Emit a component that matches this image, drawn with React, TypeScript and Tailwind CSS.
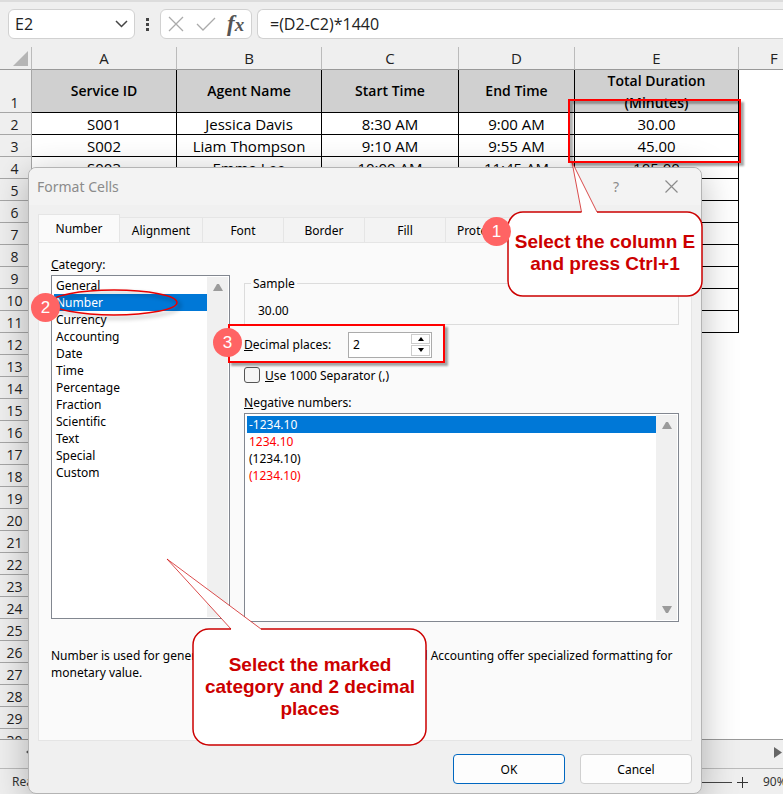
import { useState } from "react";

const sheetFont = "font-['Open_Sans','Noto_Sans',sans-serif]";
const uiFont = "font-['Noto_Sans','Open_Sans',sans-serif]";
const noteFont = "font-['Liberation_Sans',Arial,sans-serif]";

const headers = ["Service ID", "Agent Name", "Start Time", "End Time"];
const records = [
  ["S001", "Jessica Davis", "8:30 AM", "9:00 AM", "30.00"],
  ["S002", "Liam Thompson", "9:10 AM", "9:55 AM", "45.00"],
  ["S003", "Emma Lee", "10:00 AM", "11:45 AM", "105.00"],
];
const borderedRows = 11;
const lastRow = 30;

const categories = [
  "General",
  "Number",
  "Currency",
  "Accounting",
  "Date",
  "Time",
  "Percentage",
  "Fraction",
  "Scientific",
  "Text",
  "Special",
  "Custom",
];

const negatives = [
  { text: "-1234.10", red: false },
  { text: "1234.10", red: true },
  { text: "(1234.10)", red: false },
  { text: "(1234.10)", red: true },
];

function FormulaBar() {
  return (
    <div className={`flex h-[47px] shrink-0 border-t-2 border-[#dcdcdc] bg-[#efefef] pt-[7px] pl-2 text-base text-[#222] ${sheetFont}`}>
      <div className="flex h-[30px] w-[127px] items-center justify-between rounded-md border border-[#d1d1d1] bg-white pr-1.5 pl-1.5">
        <input aria-label="Name box" className="w-16 bg-transparent outline-none" defaultValue="E2" />
        <svg width="13" height="8" viewBox="0 0 13 8" fill="none" stroke="#444" strokeWidth="1.500">
          <path d="M1 1l5.500 5.500L12 1" />
        </svg>
      </div>
      <svg className="mx-[10px] mt-2" width="5" height="15" viewBox="0 0 5 15" fill="#444">
        <path d="M1 1h3v3H1zM1 6h3v3H1zM1 11h3v3H1z" />
      </svg>
      <div className="flex h-[30px] w-[92px] items-center rounded-md border border-[#d1d1d1] bg-white pl-[7px]">
        <button aria-label="Cancel entry">
          <svg width="16" height="16" viewBox="0 0 16 16" stroke="#aaa" strokeWidth="1.300">
            <path d="M1 1l14 14M15 1L1 15" />
          </svg>
        </button>
        <button aria-label="Enter" className="ml-3">
          <svg width="20" height="16" viewBox="0 0 20 16" fill="none" stroke="#aaa" strokeWidth="1.300">
            <path d="M1 8l6 6L19 2" />
          </svg>
        </button>
        <button
          aria-label="Insert function"
          className="ml-[11px] font-['Liberation_Serif',serif] text-[23px] leading-6 font-bold text-[#555] italic"
        >
          f<span className="text-[19px]">x</span>
        </button>
      </div>
      <div className="ml-[5px] flex h-[30px] min-w-0 flex-1 items-center rounded-l-md border border-r-0 border-[#d1d1d1] bg-white pl-3">
        <input aria-label="Formula" className="w-full bg-transparent outline-none" defaultValue="=(D2-C2)*1440" />
      </div>
    </div>
  );
}

function Sheet() {
  const rows = Array.from({ length: lastRow - 1 }, (_, i) => i + 2);
  const rowHead =
    "border-r border-b border-[#a6a6a6] bg-[#efefef] pt-0.5 pr-0.5 pb-0 pl-0 text-center align-bottom text-sm leading-[19px] font-normal text-[#222]";
  const colHead = "h-[23px] border-b border-[#999] bg-[#efefef] p-0 font-normal text-[#222]";
  const dataHead = "border-r border-b border-black bg-[#d0d0d0] p-0 text-sm font-semibold";
  return (
    <div className="min-h-0 flex-1 overflow-hidden bg-white">
      <table className={`w-full table-fixed border-separate border-spacing-0 text-[15px] leading-[19px] text-black ${sheetFont}`}>
        <colgroup>
          <col className="w-8" />
          <col className="w-[145px]" />
          <col className="w-[145px]" />
          <col className="w-[137px]" />
          <col className="w-[116px]" />
          <col className="w-[164px]" />
          <col />
        </colgroup>
        <thead>
          <tr>
            <th className={`${colHead} border-r border-r-[#bbb]`}>
              <svg className="ml-[13px]" width="15" height="15" viewBox="0 0 15 15" fill="#b5b5b5">
                <path d="M15 0v15H0z" />
              </svg>
            </th>
            {["A", "B", "C", "D", "E"].map((c) => (
              <th key={c} className={`${colHead} border-r border-r-[#bbb]`}>
                {c}
              </th>
            ))}
            <th className={`${colHead} text-left`}>
              <span className="pl-[31px]">F</span>
            </th>
          </tr>
        </thead>
        <tbody>
          <tr className="h-[43px]">
            <th className={rowHead}>1</th>
            {headers.map((h) => (
              <th key={h} className={dataHead}>
                {h}
              </th>
            ))}
            <th className={dataHead}>
              <div className="h-[42px] overflow-hidden leading-[22px]">
                Total Duration
                <br />
                (Minutes)
              </div>
            </th>
          </tr>
          {rows.map((n) => (
            <tr key={n} className="h-[22px]">
              <th className={rowHead}>{n}</th>
              {n <= borderedRows &&
                [0, 1, 2, 3, 4].map((c) => (
                  <td key={c} className="border-r border-b border-black px-0 pt-0.5 pb-0 text-center">
                    {records[n - 2]?.[c]}
                  </td>
                ))}
            </tr>
          ))}
        </tbody>
      </table>
    </div>
  );
}

function BottomBars() {
  return (
    <div className={`shrink-0 bg-[#efefef] text-[12px] text-[#333] ${uiFont}`}>
      <div className="flex h-[29px] items-center justify-between border-t border-[#999] pr-px pb-1 pl-6">
        <svg width="8" height="10" viewBox="0 0 8 10" fill="#555">
          <path d="M7 1v8L2 5z" />
        </svg>
        <svg width="8" height="11" viewBox="0 0 8 11" fill="#666">
          <path d="M0 0v11L8 5.500z" />
        </svg>
      </div>
      <div className="flex h-[26px] items-center justify-between border-t border-[#bbb] pt-px pl-3">
        <span>Ready</span>
        <div className="flex items-center">
          <span className="h-px w-20 bg-[#444]" />
          <button aria-label="Zoom in" className="mx-[5px]">
            <svg width="11" height="11" viewBox="0 0 11 11" stroke="#333">
              <path d="M5.500 0v11M0 5.500h11" />
            </svg>
          </button>
          <span className="ml-2.5 w-5 whitespace-nowrap">90%</span>
        </div>
      </div>
    </div>
  );
}

function Arrow({ down = false }: { down?: boolean }) {
  return (
    <svg width="10" height="8" viewBox="0 0 10 8" fill="#9b9b9b">
      <path d={down ? "M0 1h10L6 8H4z" : "M0 7h10L6 0H4z"} />
    </svg>
  );
}

function FormatCells() {
  const [category, setCategory] = useState(1);
  const [negative, setNegative] = useState(0);
  const [places, setPlaces] = useState(2);
  const tab = "h-[25px] border border-b-0 border-l-0 border-[#e5e5e5] bg-[#f3f3f3]";
  return (
    <section
      role="dialog"
      aria-label="Format Cells"
      className={`absolute top-[167px] left-[28px] w-[674px] rounded-lg border border-[#b4b4b4] bg-[#f0f0f0] pb-[9px] text-[12px] leading-[17px] text-black shadow-[0_8px_36px_rgba(0,0,0,0.28)] ${uiFont}`}
    >
      <header className="flex h-[37px] items-center rounded-t-lg bg-[#f3f3f3] pl-2 text-sm text-[#8b8b8b]">
        <h1 className="flex-1">Format Cells</h1>
        <button aria-label="Help" className="mr-[46px]">
          ?
        </button>
        <button aria-label="Close" className="mr-[23px]">
          <svg width="13" height="13" viewBox="0 0 13 13" stroke="#8b8b8b" strokeWidth="1.200">
            <path d="M.5.5l12 12M12.500.5l-12 12" />
          </svg>
        </button>
      </header>

      <div className="px-[9px] pt-[9px]">
        <nav role="tablist" className="flex items-end">
          <button role="tab" aria-selected="true" className="h-7 w-[82px] border border-b-0 border-[#e5e5e5] bg-[#fafafa]">
            Number
          </button>
          <button role="tab" className={`${tab} w-[83px]`}>Alignment</button>
          <button role="tab" className={`${tab} w-[81px]`}>Font</button>
          <button role="tab" className={`${tab} w-[81px]`}>Border</button>
          <button role="tab" className={`${tab} w-[81px]`}>Fill</button>
          <button role="tab" className={`${tab} w-[81px]`}>Protection</button>
        </nav>

        <div className="border border-[#e5e5e5] bg-[#fafafa] px-3 pt-[13px] pb-[59px]">
          <div className="flex gap-3.5">
            <div>
              <h2 id="category">
                <u>C</u>ategory:
              </h2>
              <div className="mt-0.5 flex h-[344px] w-[179px] border border-[#828790] bg-white p-px">
                <ul role="listbox" aria-labelledby="category" className="flex-1 pl-px leading-4">
                  {categories.map((c, i) => (
                    <li
                      key={c}
                      role="option"
                      aria-selected={i === category}
                      onClick={() => setCategory(i)}
                      className={`pt-px pl-0.5 ${i === category ? "bg-[#0078d7] text-white" : ""}`}
                    >
                      {c}
                    </li>
                  ))}
                </ul>
                <div className="flex w-[21px] justify-center bg-[#f0f0f0] pt-[7px]">
                  <Arrow />
                </div>
              </div>
            </div>

            <div className="min-w-0 flex-1 pt-[19px]">
              <fieldset className="h-[50px] border border-[#dcdcdc] pl-[13px]">
                <legend className="-ml-[7px] px-0.5">Sample</legend>
                <output className="mt-2.5 block">30.00</output>
              </fieldset>
              <div className="mt-1.5 flex h-[27px] items-center">
                <label htmlFor="places" className="w-[104px]">
                  <u>D</u>ecimal places:
                </label>
                <div className="flex h-[26px] w-[84px] border border-[#ababab] bg-white p-px">
                  <input
                    id="places"
                    type="text"
                    inputMode="numeric"
                    value={places}
                    onChange={(e) => setPlaces(Number(e.target.value) || 0)}
                    className="min-w-0 flex-1 bg-transparent pl-[3px] outline-none"
                  />
                  <div className="flex w-[19px] flex-col gap-px">
                    <button
                      aria-label="Increase"
                      onClick={() => setPlaces(places + 1)}
                      className="flex flex-1 items-center justify-center border border-[#ccc]"
                    >
                      <svg width="6" height="4" viewBox="0 0 6 4">
                        <path d="M0 4h6L3 0z" />
                      </svg>
                    </button>
                    <button
                      aria-label="Decrease"
                      onClick={() => setPlaces(Math.max(0, places - 1))}
                      className="flex flex-1 items-center justify-center border border-[#ccc]"
                    >
                      <svg width="6" height="4" viewBox="0 0 6 4">
                        <path d="M0 0h6L3 4z" />
                      </svg>
                    </button>
                  </div>
                </div>
              </div>
              <label className="mt-2 flex h-[18px] items-center gap-[5px]">
                <input
                  type="checkbox"
                  className="size-4 appearance-none rounded-[3px] border border-[#555] bg-[#f5f5f5] checked:bg-[#0078d7]"
                />
                <span>
                  <u>U</u>se 1000 Separator (,)
                </span>
              </label>
              <h2 id="negative" className="mt-2.5">
                <u>N</u>egative numbers:
              </h2>
              <div className="mt-0.5 flex h-[209px] border border-[#828790] bg-white p-px">
                <ul role="listbox" aria-labelledby="negative" className="flex-1 pt-px pl-px leading-4">
                  {negatives.map((n, i) => (
                    <li
                      key={i}
                      role="option"
                      aria-selected={i === negative}
                      onClick={() => setNegative(i)}
                      className={`pt-px pl-0.5 ${
                        i === negative ? "bg-[#0078d7] text-white" : n.red ? "text-[#f00]" : ""
                      }`}
                    >
                      {n.text}
                    </li>
                  ))}
                </ul>
                <div className="flex w-[21px] flex-col items-center justify-between bg-[#f0f0f0] py-[7px]">
                  <Arrow />
                  <Arrow down />
                </div>
              </div>
            </div>
          </div>
          <p className="mt-[25px]">
            Number is used for general display of numbers.
            <span className="pl-8">Currency and Accounting offer specialized formatting for monetary value.</span>
          </p>
        </div>

        <footer className="mt-[13px] flex justify-end gap-[15px]">
          <button className="h-[30px] w-28 rounded border border-[#0067c0] bg-[#fdfdfd]">OK</button>
          <button className="h-[30px] w-28 rounded border border-[#d0d0d0] bg-[#fdfdfd]">Cancel</button>
        </footer>
      </div>
    </section>
  );
}

function StepBadge({ step, className }: { step: number; className: string }) {
  return (
    <span
      className={`absolute flex size-[29px] items-center justify-center rounded-full bg-[#ff6464] text-[17px] font-normal text-white ${noteFont} ${className}`}
    >
      {step}
    </span>
  );
}

function Annotations() {
  return (
    <div className={`pointer-events-none text-[19px] leading-[22px] font-bold text-[#c00] ${noteFont}`}>
      <div className="absolute top-[99px] left-[568px] h-16 w-[173px] border-2 border-[#f00] shadow-[3px_3px_2px_rgba(0,0,0,0.35),inset_3px_3px_2px_rgba(0,0,0,0.3)]" />
      <div className="absolute top-[324px] left-[228px] h-[39px] w-[217px] border-2 border-[#f00] shadow-[3px_3px_2px_rgba(0,0,0,0.35)]" />
      <svg
        className="absolute top-[287px] left-[48px] drop-shadow-[3px_3px_2px_rgba(0,0,0,0.4)]"
        width="132"
        height="32"
        viewBox="0 0 132 32"
        fill="none"
        stroke="#e80000"
        strokeWidth="1.500"
      >
        <ellipse cx="66" cy="15.500" rx="63" ry="12.500" />
      </svg>

      <svg className="absolute top-[160px] left-[507px]" width="197" height="138" viewBox="0 0 197 138" fill="white" stroke="#c00" strokeWidth="1.500">
        <path d="M16 52H74.500L65 2L90 52H180a15 15 0 0 1 15 15V121a15 15 0 0 1 -15 15H16a15 15 0 0 1 -15 -15V67a15 15 0 0 1 15 -15z" stroke="none" />
        <path d="M74.500 52H16a15 15 0 0 0 -15 15V121a15 15 0 0 0 15 15H180a15 15 0 0 0 15 -15V67a15 15 0 0 0 -15 -15H90" fill="none" />
        <path d="M74.500 52L65 2L90 52" fill="none" strokeWidth="0.700" />
      </svg>
      <p className="absolute top-[231px] left-[508px] w-[194px] text-center">
        Select the column E and press Ctrl+1
      </p>

      <svg className="absolute top-[557px] left-[165px]" width="263" height="191" viewBox="0 0 263 191" fill="white" stroke="#c00" strokeWidth="1.500">
        <path d="M44 72H66L2 2L96 72H245a16 16 0 0 1 16 16V172a16 16 0 0 1 -16 16H44a16 16 0 0 1 -16 -16V88a16 16 0 0 1 16 -16z" stroke="none" />
        <path d="M66 72H44a16 16 0 0 0 -16 16V172a16 16 0 0 0 16 16H245a16 16 0 0 0 16 -16V88a16 16 0 0 0 -16 -16H96" fill="none" />
        <path d="M66 72L2 2L96 72" fill="none" strokeWidth="0.700" />
      </svg>
      <p className="absolute top-[654px] left-[194px] w-[232px] text-center">
        Select the marked category and 2 decimal places
      </p>

      <StepBadge step={1} className="top-[217px] left-[482px]" />
      <StepBadge step={2} className="top-[293px] left-[31px]" />
      <StepBadge step={3} className="top-[328px] left-[213px]" />
    </div>
  );
}

export default function App() {
  return (
    <main className="relative flex h-screen flex-col overflow-hidden bg-[#efefef]">
      <FormulaBar />
      <Sheet />
      <BottomBars />
      <FormatCells />
      <Annotations />
    </main>
  );
}
